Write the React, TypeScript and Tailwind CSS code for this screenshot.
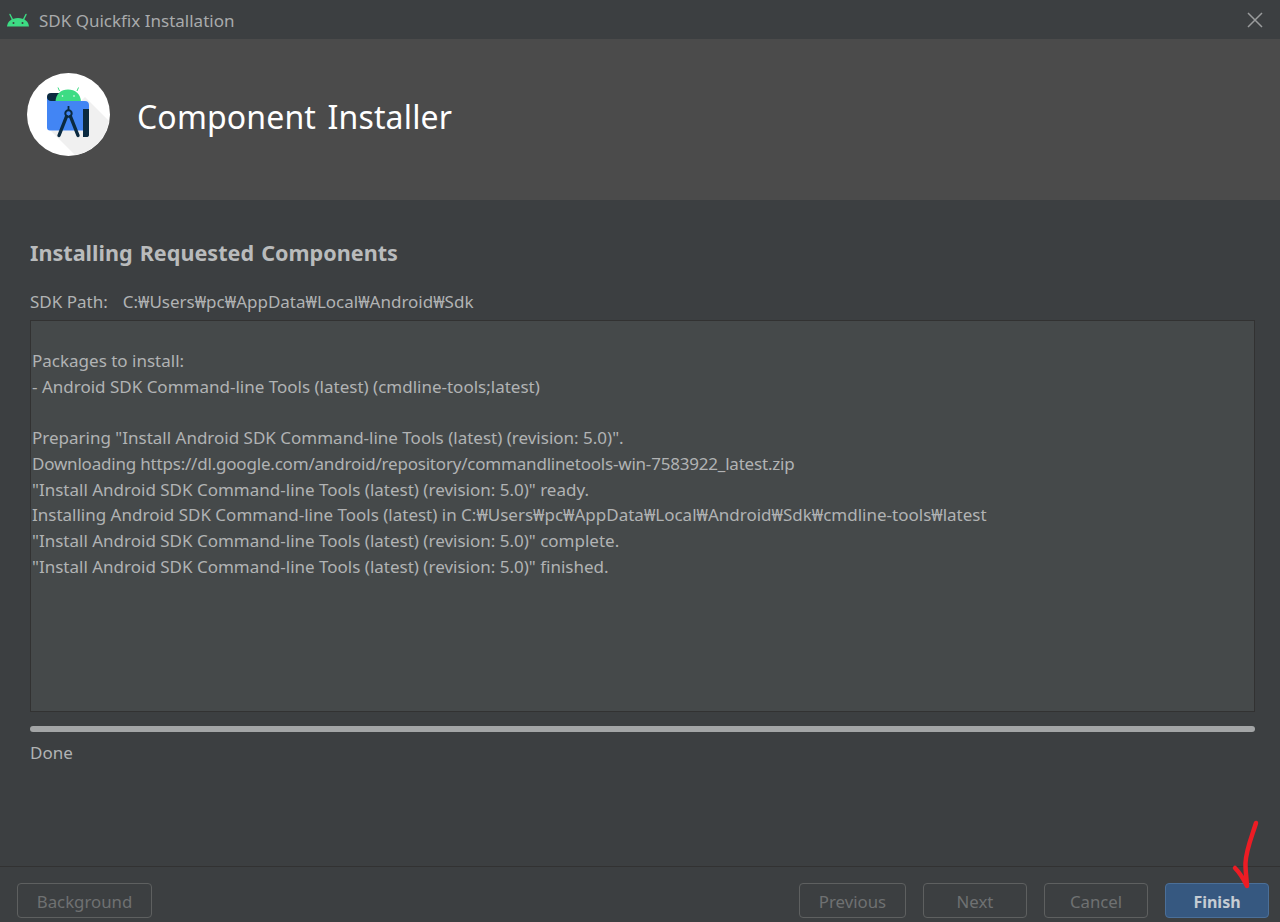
const font = { fontFamily: '"Noto Sans", "Open Sans", "Noto Sans CJK KR", sans-serif' };

function Android({ className }: { className: string }) {
  return (
    <svg viewBox="0 0 24 14" className={className}>
      <path d="M1 13.500C1.500 8.500 5.500 5 12 5s10.500 3.500 11 8.500Z" fill="#3ddc84" />
      <path d="M6.500 6.500 4 1.500M17.500 6.500 20 1.500" stroke="#3ddc84" strokeWidth="1.400" strokeLinecap="round" />
      <circle cx="7.500" cy="10" r="1" fill="#3c3f41" />
      <circle cx="16.500" cy="10" r="1" fill="#3c3f41" />
    </svg>
  );
}

function Logo() {
  return (
    <svg viewBox="0 0 83 83" className="h-[83px] w-[83px] shrink-0">
      <circle cx="41.500" cy="41.500" r="41.500" fill="#ffffff" />
      <path d="M58 24 82 48A41.500 41.500 0 0 1 48 82L24 58Z" fill="#f0f0f0" />
      <path d="M20 24a4 4 0 0 1 4-4h8v10H20z" fill="#0b2a40" />
      <path d="M28.500 29C28.500 21 34 16.500 41 16.500S54 21 54 29Z" fill="#3ddc84" />
      <path d="M32.500 18 31 14.500M50 18l1.500-3.500" stroke="#3ddc84" strokeWidth="1" />
      <circle cx="35.500" cy="23" r=".8" fill="#ffffff" />
      <circle cx="47" cy="23" r=".8" fill="#ffffff" />
      <path d="M20 24c0 2.500 2 4 4 4h34c2.500 0 4 1.500 4 4v24c0 1-1 1.500-2 1.500H23a3 3 0 0 1-3-3Z" fill="#4285f4" />
      <path d="M56 36h6v26c0 1.500-1 2-2.500 2H56z" fill="#0b2a40" />
      <path d="M39.500 43.500 32 62.500M43.500 43.500l7.500 19" stroke="#0b2a40" strokeWidth="3.400" strokeLinecap="round" />
      <circle cx="41.500" cy="40.500" r="3.200" fill="none" stroke="#0b2a40" strokeWidth="2" />
      <path d="M41.500 33v4" stroke="#0b2a40" strokeWidth="1.800" />
    </svg>
  );
}

function DisabledButton({ label, width }: { label: string; width: string }) {
  return (
    <div className={`flex h-[35px] items-center justify-center rounded-[4px] border border-[#5e6060] pt-[3px] text-[16.800px] text-[#6f7172] ${width}`}>
      {label}
    </div>
  );
}

const logLines = [
  "",
  "Packages to install:",
  "- Android SDK Command-line Tools (latest) (cmdline-tools;latest)",
  "",
  'Preparing "Install Android SDK Command-line Tools (latest) (revision: 5.0)".',
  "Downloading https://dl.google.com/android/repository/commandlinetools-win-7583922_latest.zip",
  '"Install Android SDK Command-line Tools (latest) (revision: 5.0)" ready.',
  "Installing Android SDK Command-line Tools (latest) in C:₩Users₩pc₩AppData₩Local₩Android₩Sdk₩cmdline-tools₩latest",
  '"Install Android SDK Command-line Tools (latest) (revision: 5.0)" complete.',
  '"Install Android SDK Command-line Tools (latest) (revision: 5.0)" finished.',
];

export default function App() {
  return (
    <div style={font} className="relative flex h-[922px] w-[1280px] flex-col overflow-hidden bg-[#3c3f41] text-[#bbbbbb]">
      <div className="flex h-[39px] shrink-0 items-center pl-[6px] pr-[17px]">
        <Android className="h-[14px] w-[24px]" />
        <span className="ml-[9px] pt-[2px] text-[17px] leading-none text-[#a9abac]">SDK Quickfix Installation</span>
        <svg viewBox="0 0 16 16" className="ml-auto h-[16px] w-[16px]">
          <path d="M1 1 15 15M15 1 1 15" stroke="#9a9c9d" strokeWidth="1.500" />
        </svg>
      </div>

      <div className="flex h-[161px] shrink-0 items-center bg-[#4b4b4b] pb-[11px] pl-[27px]">
        <Logo />
        <span className="ml-[27px] mt-[6px] text-[32px] leading-none tracking-[0.15px] text-[#ffffff] [word-spacing:3px]">Component Installer</span>
      </div>

      <div className="flex flex-1 flex-col px-[30px]">
        <h1 className="mt-[39px] text-[21.600px] font-bold leading-[28px] text-[#b9bbbc] [word-spacing:1.500px]">Installing Requested Components</h1>
        <div className="mt-[23px] flex text-[17px] leading-[24px] text-[#b1b3b4]">
          <span>SDK Path:</span>
          <span className="ml-[15px]">C:₩Users₩pc₩AppData₩Local₩Android₩Sdk</span>
        </div>
        <div className="mt-[6px] h-[392px] w-[1225px] border border-[#323232] bg-[#45494a] pl-[1px] pt-[1px] text-[17px] leading-[25.750px] text-[#b1b3b4]">
          {logLines.map((line, i) => (
            <div key={i} className={`h-[25.750px] whitespace-nowrap ${line.startsWith("Downloading") ? "tracking-[-0.2px]" : ""}`}>{line}</div>
          ))}
        </div>
        <div className="mt-[14px] h-[6px] w-[1225px] rounded-full bg-[#a3a5a6]" />
        <div className="mt-[9px] text-[17px] leading-[24px] text-[#b1b3b4]">Done</div>
      </div>

      <div className="flex h-[56px] shrink-0 items-start border-t border-[#323232] pl-[17px] pr-[11px] pt-[16px]">
        <DisabledButton label="Background" width="w-[135px]" />
        <div className="ml-auto flex gap-[17px]">
          <DisabledButton label="Previous" width="w-[107px]" />
          <DisabledButton label="Next" width="w-[104px]" />
          <DisabledButton label="Cancel" width="w-[104px]" />
          <div className="flex h-[35px] w-[104px] items-center justify-center rounded-[4px] border border-[#4b6f98] bg-[#365880] pt-[3px] text-[16px] font-bold text-[#c5ccd3]">
            Finish
          </div>
        </div>
      </div>

      <svg viewBox="0 0 40 74" className="absolute left-[1226px] top-[818px] h-[74px] w-[40px]">
        <path d="M30 5C26 18 20 32 19.500 45c-.2 6 .5 10 1.500 23C18 62 14 55 9 50" fill="none" stroke="#ed1c24" strokeWidth="4.500" strokeLinecap="round" strokeLinejoin="round" />
      </svg>
    </div>
  );
}
